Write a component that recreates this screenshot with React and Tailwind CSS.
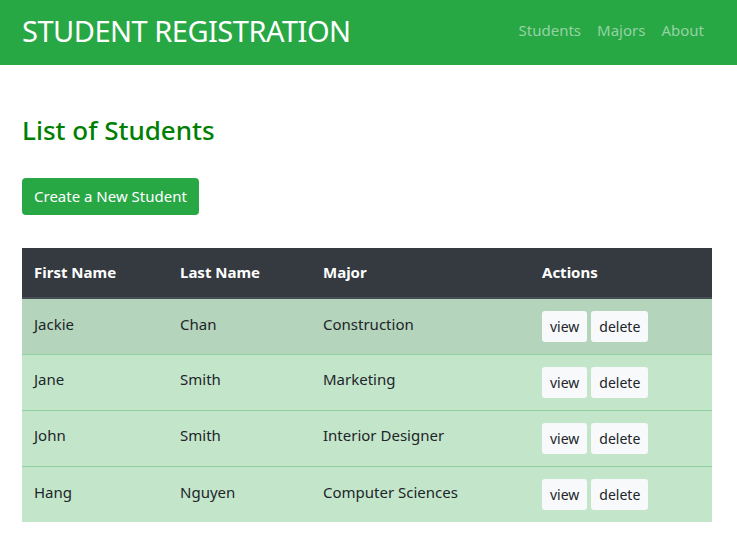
import React from "react";

const rows = [
  ["Jackie", "Chan", "Construction"],
  ["Jane", "Smith", "Marketing"],
  ["John", "Smith", "Interior Designer"],
  ["Hang", "Nguyen", "Computer Sciences"],
];

export default function App() {
  return (
    <div className="min-h-[546px] bg-white text-[#212529]" style={{ fontFamily: '"Noto Sans", "Open Sans", sans-serif' }}>
      <nav className="h-[65px] bg-[#28a745] flex items-center justify-between pl-[22px] pr-[25px]">
        <div className="text-white text-[29px] leading-none tracking-[-0.5px] -mt-1">STUDENT REGISTRATION</div>
        <div className="flex text-[15px] text-[#94d3a2] -mt-1">
          <a className="px-2">Students</a>
          <a className="px-2">Majors</a>
          <a className="px-2">About</a>
        </div>
      </nav>
      <main className="px-[22px]">
        <h1 className="text-[#008000] text-[26px] font-medium leading-[1.2] mt-[50px] mb-[32px]">List of Students</h1>
        <button className="bg-[#28a745] text-white text-[15px] rounded-[4px] h-[37px] px-3 leading-none">Create a New Student</button>
        <table className="mt-[33px] w-[690px] text-[15px] border-collapse">
          <thead>
            <tr className="bg-[#343a40] text-white h-[50px] border-b-2 border-[#454d55]">
              <th className="w-[146px] text-left font-bold px-3">First Name</th>
              <th className="w-[143px] text-left font-bold px-3">Last Name</th>
              <th className="w-[219px] text-left font-bold px-3">Major</th>
              <th className="text-left font-bold px-3">Actions</th>
            </tr>
          </thead>
          <tbody>
            {rows.map((r, i) => (
              <tr key={i} className={`h-[56px] ${i === 0 ? "bg-[#b4d4bb]" : "bg-[#c3e6cb]"} ${i > 0 ? "border-t border-[#8fd19e]" : ""}`}>
                <td className="px-3 pb-[5px]">{r[0]}</td>
                <td className="px-3 pb-[5px]">{r[1]}</td>
                <td className="px-3 pb-[5px]">{r[2]}</td>
                <td className="px-3">
                  <div className="flex gap-1">
                    <button className="bg-[#f8f9fa] rounded-[3px] h-[31px] px-2 text-[14px] text-[#212529]">view</button>
                    <button className="bg-[#f8f9fa] rounded-[3px] h-[31px] px-2 text-[14px] text-[#212529]">delete</button>
                  </div>
                </td>
              </tr>
            ))}
          </tbody>
        </table>
      </main>
    </div>
  );
}
